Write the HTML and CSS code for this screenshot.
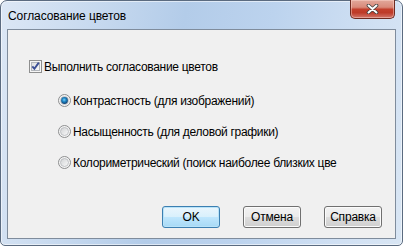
FILE: index.html
```html
<!DOCTYPE html>
<html lang="ru">
<head>
    <meta charset="UTF-8">
    <title>Согласование цветов</title>
    <link rel="stylesheet" href="styles.css">
</head>
<body>

    <div class="window">
        <div class="titlebar">
            <span class="title">Согласование цветов</span>
            <div class="close-btn">
                <svg width="13" height="10" viewBox="0 0 13 10">
                    <path d="M2.5 1.5 L10.5 8.5 M10.5 1.5 L2.5 8.5" stroke="#3d3d3d" stroke-width="3.6" stroke-linecap="round"/>
                    <path d="M2.5 1.5 L10.5 8.5 M10.5 1.5 L2.5 8.5" stroke="#ffffff" stroke-width="2" stroke-linecap="round"/>
                </svg>
            </div>
        </div>

        <div class="client">
            <label class="row check-row">
                <svg class="box" width="13" height="13" viewBox="0 0 13 13">
                    <defs>
                        <linearGradient id="cbFill" x1="0" y1="0" x2="1" y2="1">
                            <stop offset="0" stop-color="#dcdedf"/>
                            <stop offset="1" stop-color="#fbfbfb"/>
                        </linearGradient>
                    </defs>
                    <rect x="0.5" y="0.5" width="12" height="12" fill="#f6f6f6" stroke="#8e8f8f"/>
                    <rect x="2.5" y="2.5" width="8" height="8" fill="url(#cbFill)" stroke="#b3b7bc"/>
                    <path d="M3.3 6.3 L5.4 8.8 L9.8 2.6" fill="none" stroke="#3b4f95" stroke-width="1.9"/>
                </svg>
                <span>Выполнить согласование цветов</span>
            </label>

            <div class="options">
                <label class="row radio-row">
                    <svg class="dot" width="13" height="13" viewBox="0 0 13 13">
                        <defs>
                            <linearGradient id="rdFill" x1="0" y1="0" x2="1" y2="1">
                                <stop offset="0" stop-color="#d0d2d4"/>
                                <stop offset="1" stop-color="#fafafa"/>
                            </linearGradient>
                            <radialGradient id="rdOn" cx="0.45" cy="0.4" r="0.6">
                                <stop offset="0" stop-color="#7ed0f7"/>
                                <stop offset="0.45" stop-color="#1f87c6"/>
                                <stop offset="1" stop-color="#123f6e"/>
                            </radialGradient>
                        </defs>
                        <circle cx="6.5" cy="6.5" r="6" fill="#f4f4f4" stroke="#8d8e8f"/>
                        <circle cx="6.5" cy="6.5" r="4" fill="url(#rdFill)" stroke="#b5b8bb" stroke-width="0.8"/>
                        <circle cx="6.5" cy="6.5" r="3.4" fill="url(#rdOn)"/>
                    </svg>
                    <span>Контрастность (для изображений)</span>
                </label>

                <label class="row radio-row">
                    <svg class="dot" width="13" height="13" viewBox="0 0 13 13">
                        <circle cx="6.5" cy="6.5" r="6" fill="#f4f4f4" stroke="#8d8e8f"/>
                        <circle cx="6.5" cy="6.5" r="4" fill="url(#rdFill)" stroke="#b5b8bb" stroke-width="0.8"/>
                    </svg>
                    <span>Насыщенность (для деловой графики)</span>
                </label>

                <label class="row radio-row">
                    <svg class="dot" width="13" height="13" viewBox="0 0 13 13">
                        <circle cx="6.5" cy="6.5" r="6" fill="#f4f4f4" stroke="#8d8e8f"/>
                        <circle cx="6.5" cy="6.5" r="4" fill="url(#rdFill)" stroke="#b5b8bb" stroke-width="0.8"/>
                    </svg>
                    <span class="clip">Колориметрический (поиск наиболее близких цве</span>
                </label>
            </div>

            <div class="buttons">
                <button class="btn default">OK</button>
                <button class="btn">Отмена</button>
                <button class="btn">Справка</button>
            </div>
        </div>
    </div>

</body>
</html>
```

FILE: styles.css
```css
body {
    margin: 0;
    width: 403px;
    height: 246px;
    overflow: hidden;
    font-family: 'Liberation Sans', Arial, sans-serif;
    font-size: 12px;
    color: #000;
}

.window {
    box-sizing: border-box;
    width: 403px;
    height: 246px;
    padding: 0 6px 6px 6px;
    border: 1px solid #5b6b80;
    border-radius: 7px 7px 5px 5px;
    background: linear-gradient(100deg, #dce7f5 0%, #cbdcf0 18%, #b3cce9 42%, #bcd3ee 62%, #d0e0f3 85%, #d9e6f4 100%);
    box-shadow: inset 0 0 0 1px rgba(255, 255, 255, 0.55);
}

.titlebar {
    display: flex;
    height: 28px;
}

.title {
    padding: 8px 0 0 1px;
    line-height: 15px;
    letter-spacing: -0.1px;
}

.close-btn {
    box-sizing: border-box;
    width: 45px;
    height: 19px;
    margin: -1px 1px 0 auto;
    border: 1px solid #6e2a20;
    border-top: none;
    border-radius: 0 0 5px 5px;
    background: linear-gradient(#e2a89b 0%, #d98a7a 40%, #c23f2c 52%, #bd3a28 70%, #d2766a 100%);
    box-shadow: inset 0 0 0 1px rgba(255, 220, 210, 0.45);
    display: flex;
    align-items: center;
    justify-content: center;
}

.client {
    box-sizing: border-box;
    height: 210px;
    border: 1px solid #7f8c9c;
    background: #f0f0f0;
    padding: 28px 13px 0 21px;
    display: flex;
    flex-direction: column;
}

.row {
    display: flex;
    align-items: center;
    height: 17px;
    white-space: nowrap;
    letter-spacing: -0.3px;
}

.row svg {
    flex: none;
    margin-right: 2px;
}

.options {
    display: flex;
    flex-direction: column;
    gap: 14px;
    margin: 17px 0 0 29px;
}

.clip {
    display: block;
    width: 290px;
    overflow: hidden;
}

.buttons {
    display: flex;
    justify-content: flex-end;
    gap: 23px;
    margin-top: 35px;
}

.btn {
    width: 58px;
    height: 22px;
    padding: 0;
    font-family: 'Liberation Sans', Arial, sans-serif;
    font-size: 12px;
    letter-spacing: -0.2px;
    color: #000;
    border: 1px solid #707070;
    border-radius: 3px;
    background: linear-gradient(#f2f2f2 0%, #ebebeb 48%, #dddddd 52%, #cfcfcf 100%);
    box-shadow: inset 0 0 0 1px #fbfbfb;
}

.btn.default {
    border-color: #3c7fb1;
    background: linear-gradient(#eaf6fd 0%, #d9f0fc 48%, #bee6fd 52%, #a7d9f5 100%);
    box-shadow: inset 0 0 0 1px #b8e3f9;
}
```
